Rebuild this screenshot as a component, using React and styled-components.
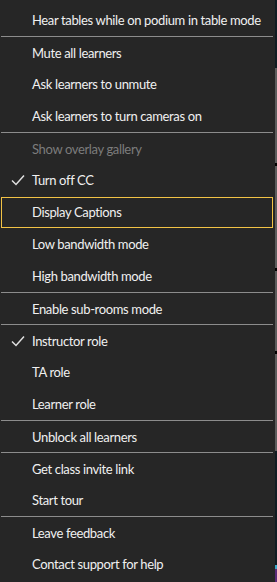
import React from "react";
import styled, { createGlobalStyle } from "styled-components";

const Global = createGlobalStyle`
  html, body { margin: 0; padding: 0; background: #0f1b21; }
  body { font-family: Lato, "Noto Sans", sans-serif; -webkit-font-smoothing: antialiased; }
`;

const Page = styled.div`
  display: flex;
  width: 277px;
  height: 582px;
  overflow: hidden;
`;

const Menu = styled.ul`
  list-style: none;
  margin: 0;
  padding: 4px 0 4px;
  width: 275px;
  flex: none;
  background: #262626;
  box-sizing: border-box;
`;

const Row = styled.li`
  position: relative;
  box-sizing: border-box;
  height: 32px;
  display: flex;
  align-items: center;
  padding-left: 31px;
  font-size: 13px;
  letter-spacing: -0.36px;
  color: ${(p) => (p.$disabled ? "#7c7c7c" : "#f0f0f0")};
  border-top: ${(p) => (p.$divider ? "1px solid #8c8c8c" : "none")};
  margin: 0 2px 0 1px;
  white-space: nowrap;
  ${(p) =>
    p.$focused &&
    `
    &::after {
      content: "";
      position: absolute;
      left: 0; right: 0; top: 1px; bottom: 0;
      border: 1px solid #f2c245;
    }
  `}
`;

const Check = styled.svg`
  position: absolute;
  left: 10px;
  top: 50%;
  margin-top: -6px;
  width: 14px;
  height: 12px;
`;

const Strip = styled.div`
  width: 2px;
  flex: none;
  display: flex;
  flex-direction: column;
`;

const Seg = styled.div`
  height: ${(p) => p.$h}px;
  background: ${(p) => p.$c};
`;

const items = [
  { t: "Hear tables while on podium in table mode" },
  { t: "Mute all learners", d: true },
  { t: "Ask learners to unmute" },
  { t: "Ask learners to turn cameras on" },
  { t: "Show overlay gallery", d: true, dis: true },
  { t: "Turn off CC", c: true },
  { t: "Display Captions", f: true },
  { t: "Low bandwidth mode" },
  { t: "High bandwidth mode" },
  { t: "Enable sub-rooms mode", d: true },
  { t: "Instructor role", d: true, c: true },
  { t: "TA role" },
  { t: "Learner role" },
  { t: "Unblock all learners", d: true },
  { t: "Get class invite link", d: true },
  { t: "Start tour" },
  { t: "Leave feedback", d: true },
  { t: "Contact support for help" },
];

const segs = [
  [68, "#101c22"],
  [95, "#5c5c5c"],
  [3, "#000"],
  [102, "#5c5c5c"],
  [3, "#000"],
  [80, "#5c5c5c"],
  [3, "#000"],
  [97, "#5c5c5c"],
  [114, "#101c22"],
  [4, "#3aa8c8"],
  [13, "#5a2a78"],
];

export default function App() {
  return (
    <>
      <Global />
      <Page>
        <Menu>
          {items.map((it) => (
            <Row key={it.t} $divider={it.d} $disabled={it.dis} $focused={it.f}>
              {it.c && (
                <Check viewBox="0 0 14 12">
                  <path d="M1 6.5 L5 10.5 L13 1.5" fill="none" stroke="#e0e0e0" strokeWidth="1.5" />
                </Check>
              )}
              {it.t}
            </Row>
          ))}
        </Menu>
        <Strip>
          {segs.map(([h, c], i) => (
            <Seg key={i} $h={h} $c={c} />
          ))}
        </Strip>
      </Page>
    </>
  );
}
